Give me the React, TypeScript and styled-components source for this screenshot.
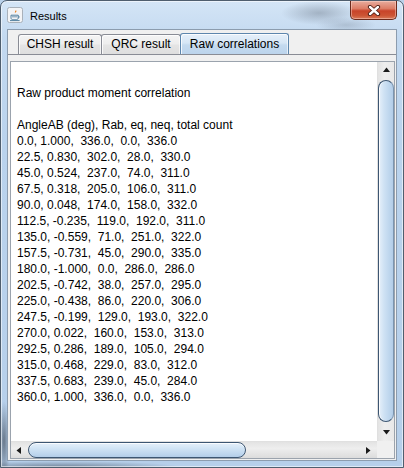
import React from "react";
import styled, { createGlobalStyle } from "styled-components";

const Global = createGlobalStyle`
  html, body { margin: 0; padding: 0; background: #b9d1ea; }
  #root { width: 404px; height: 468px; }
`;

const Window = styled.div`
  box-sizing: border-box;
  width: 404px;
  height: 468px;
  border: 1px solid #4f5e6e;
  border-radius: 7px 7px 0 0;
  padding: 0 6px 6px 6px;
  display: flex;
  flex-direction: column;
  overflow: hidden;
  box-shadow: inset 0 0 0 1px rgba(255, 255, 255, 0.55);
  background:
    radial-gradient(ellipse 38px 12px at 318px 12px, rgba(110, 122, 138, 0.45), transparent),
    radial-gradient(ellipse 30px 8px at 345px 24px, rgba(110, 122, 138, 0.3), transparent),
    radial-gradient(ellipse 6px 40px at 3px 440px, rgba(40, 48, 60, 0.55), transparent),
    radial-gradient(ellipse 120px 6px at 60px 466px, rgba(60, 72, 88, 0.55), transparent),
    linear-gradient(180deg, #d4e5f6 0%, #c3d9f0 8%, #bad3ed 30%, #b6cfea 100%);
`;

const TitleBar = styled.div`
  height: 28px;
  display: flex;
  align-items: flex-start;
  flex: none;
`;

const AppIcon = styled.svg`
  width: 16px;
  height: 16px;
  margin-top: 6px;
  flex: none;
`;

const Title = styled.div`
  margin-left: 7px;
  margin-top: 8px;
  font-family: "Liberation Sans", Arial, sans-serif;
  font-size: 11px;
  line-height: 14px;
  color: #000;
`;

const CloseButton = styled.div`
  box-sizing: border-box;
  margin-left: auto;
  width: 47px;
  height: 19px;
  border: 1px solid #6b2a1c;
  border-top: none;
  border-radius: 0 0 5px 5px;
  display: flex;
  align-items: center;
  justify-content: center;
  box-shadow: inset 0 0 0 1px rgba(255, 220, 210, 0.45);
  background: linear-gradient(180deg, #e8ad9e 0%, #dc7d66 42%, #c8442a 55%, #cc5434 80%, #d87a5a 100%);
`;

const Client = styled.div`
  flex: 1;
  border: 1px solid #8c9cae;
  background: #f0f0f0;
  display: flex;
  flex-direction: column;
  min-height: 0;
`;

const TabRow = styled.div`
  display: flex;
  align-items: flex-end;
  padding: 3px 0 0 10px;
  height: 21px;
  flex: none;
`;

const Tab = styled.div<{ $w: number; $active?: boolean }>`
  box-sizing: border-box;
  width: ${(p) => p.$w}px;
  height: ${(p) => (p.$active ? 21 : 20)}px;
  margin-left: -1px;
  &:first-child { margin-left: 0; }
  border: 1px solid ${(p) => (p.$active ? "#5d86ad" : "#898c95")};
  border-bottom: none;
  border-radius: 3px 3px 0 0;
  font-family: "Liberation Sans", Arial, sans-serif;
  font-size: 12px;
  line-height: 15px;
  padding-top: ${(p) => (p.$active ? 3 : 2)}px;
  text-align: center;
  color: #000;
  position: relative;
  z-index: ${(p) => (p.$active ? 2 : 1)};
  box-shadow: inset 1px 1px 0 rgba(255, 255, 255, 0.8), inset -1px 0 0 rgba(255, 255, 255, 0.6);
  background: ${(p) =>
    p.$active
      ? "linear-gradient(180deg, #e6f0fa 0%, #d6e6f5 45%, #c4daef 55%, #bcd4ec 100%)"
      : "linear-gradient(180deg, #f4f4f4 0%, #eeeeee 45%, #e4e4e4 55%, #dedede 100%)"};
`;

const TabPanel = styled.div`
  flex: 1;
  border-top: 1px solid #898c95;
  padding: 6px 1px 1px 2px;
  display: flex;
  min-height: 0;
`;

const ScrollPane = styled.div`
  flex: 1;
  border: 1px solid #9ba3ad;
  display: grid;
  grid-template-columns: 1fr 17px;
  grid-template-rows: 1fr 17px;
  min-height: 0;
`;

const Viewport = styled.div`
  background: #fff;
  overflow: hidden;
  padding: 7px 0 0 6px;
  font-family: "Liberation Sans", Arial, sans-serif;
  font-size: 12px;
  line-height: 16px;
  color: #000;
  white-space: pre;
`;

const Line = styled.div`
  height: 16px;
`;

const VBar = styled.div`
  display: flex;
  flex-direction: column;
  background: linear-gradient(90deg, #e3e3e3 0%, #eeeeee 40%, #e8e8e8 100%);
  border-left: 1px solid #e0e0e0;
`;

const HBar = styled.div`
  display: flex;
  flex-direction: row;
  background: linear-gradient(180deg, #e3e3e3 0%, #eeeeee 40%, #dcdcdc 100%);
  border-top: 1px solid #e0e0e0;
`;

const ArrowButton = styled.div`
  width: 17px;
  height: 17px;
  flex: none;
  display: flex;
  align-items: center;
  justify-content: center;
  box-sizing: border-box;
`;

const VTrack = styled.div`
  flex: 1;
  display: flex;
  flex-direction: column;
  padding: 1px 0 2px 0;
`;

const HTrack = styled.div`
  flex: 1;
  display: flex;
  flex-direction: row;
  padding: 0 0 0 0;
`;

const VThumb = styled.div`
  box-sizing: border-box;
  flex: 1;
  border: 1px solid #3d5672;
  border-right-color: #7b95b0;
  border-radius: 8px;
  background: linear-gradient(90deg, #e6f0fa 0%, #cfe2f4 35%, #bfd7ee 70%, #b3cde8 100%);
  box-shadow: inset 1px 0 0 rgba(255, 255, 255, 0.8);
`;

const HThumb = styled.div<{ $w: number }>`
  box-sizing: border-box;
  width: ${(p) => p.$w}px;
  flex: none;
  border: 1px solid #3d5672;
  border-radius: 8px;
  background: linear-gradient(180deg, #e6f0fa 0%, #d3e5f5 35%, #c2d9ef 70%, #b3cde8 100%);
  box-shadow: inset 0 1px 0 rgba(255, 255, 255, 0.8);
`;

const Corner = styled.div`
  background: #f0f0f0;
`;

type Dir = "up" | "down" | "left" | "right";

const Arrow = ({ dir }: { dir: Dir }) => {
  const pts: Record<Dir, string> = {
    up: "1,6 4.5,1.5 8,6",
    down: "1,2 4.5,6.5 8,2",
    left: "6,1 1.5,4.5 6,8",
    right: "2,1 6.5,4.5 2,8",
  };
  return (
    <svg width="9" height="9" viewBox="0 0 9 9">
      <polygon points={pts[dir]} fill="#1a1a1a" />
    </svg>
  );
};

const lines = [
  "",
  "Raw product moment correlation",
  "",
  "AngleAB (deg), Rab, eq, neq, total count",
  "0.0, 1.000,  336.0,  0.0,  336.0",
  "22.5, 0.830,  302.0,  28.0,  330.0",
  "45.0, 0.524,  237.0,  74.0,  311.0",
  "67.5, 0.318,  205.0,  106.0,  311.0",
  "90.0, 0.048,  174.0,  158.0,  332.0",
  "112.5, -0.235,  119.0,  192.0,  311.0",
  "135.0, -0.559,  71.0,  251.0,  322.0",
  "157.5, -0.731,  45.0,  290.0,  335.0",
  "180.0, -1.000,  0.0,  286.0,  286.0",
  "202.5, -0.742,  38.0,  257.0,  295.0",
  "225.0, -0.438,  86.0,  220.0,  306.0",
  "247.5, -0.199,  129.0,  193.0,  322.0",
  "270.0, 0.022,  160.0,  153.0,  313.0",
  "292.5, 0.286,  189.0,  105.0,  294.0",
  "315.0, 0.468,  229.0,  83.0,  312.0",
  "337.5, 0.683,  239.0,  45.0,  284.0",
  "360.0, 1.000,  336.0,  0.0,  336.0",
];

export default function App() {
  return (
    <>
      <Global />
      <Window>
        <TitleBar>
          <AppIcon viewBox="0 0 16 16">
            <rect x="0.5" y="0.5" width="15" height="15" rx="2" fill="#f3f4f6" stroke="#a9b1ba" />
            <path d="M8.6 2.2c1.2 1.3-1.6 2.4-.4 3.9-.1-1.2 1.9-1.9.4-3.9z" fill="#e76f00" />
            <path d="M9.8 3.6c-.9.6-1.6 1.3-.9 2.3-.1-.9.6-1.4.9-2.3z" fill="#e76f00" />
            <path d="M4 8.2h7.2v2.6c0 1.3-1 2-2 2H6c-1 0-2-.7-2-2z" fill="none" stroke="#5382a1" strokeWidth="1" />
            <path d="M11.2 9c1.5 0 1.5 1.9 0 1.9" fill="none" stroke="#5382a1" strokeWidth="0.9" />
            <path d="M3 13.6h9.6" stroke="#5382a1" strokeWidth="1" />
            <path d="M5 9.8h5.2" stroke="#5382a1" strokeWidth="0.8" />
          </AppIcon>
          <Title>Results</Title>
          <CloseButton>
            <svg width="14" height="11" viewBox="0 0 14 11">
              <path d="M3 2l8 7M11 2l-8 7" stroke="#4a1c12" strokeWidth="4.2" strokeLinecap="round" />
              <path d="M3 2l8 7M11 2l-8 7" stroke="#ffffff" strokeWidth="2.4" strokeLinecap="round" />
            </svg>
          </CloseButton>
        </TitleBar>
        <Client>
          <TabRow>
            <Tab $w={84}>CHSH result</Tab>
            <Tab $w={80}>QRC result</Tab>
            <Tab $w={109} $active>
              Raw correlations
            </Tab>
          </TabRow>
          <TabPanel>
            <ScrollPane>
              <Viewport>
                {lines.map((l, i) => (
                  <Line key={i}>{l}</Line>
                ))}
              </Viewport>
              <VBar>
                <ArrowButton>
                  <Arrow dir="up" />
                </ArrowButton>
                <VTrack>
                  <VThumb />
                </VTrack>
                <ArrowButton>
                  <Arrow dir="down" />
                </ArrowButton>
              </VBar>
              <HBar>
                <ArrowButton>
                  <Arrow dir="left" />
                </ArrowButton>
                <HTrack>
                  <HThumb $w={218} />
                </HTrack>
                <ArrowButton>
                  <Arrow dir="right" />
                </ArrowButton>
              </HBar>
              <Corner />
            </ScrollPane>
          </TabPanel>
        </Client>
      </Window>
    </>
  );
}
